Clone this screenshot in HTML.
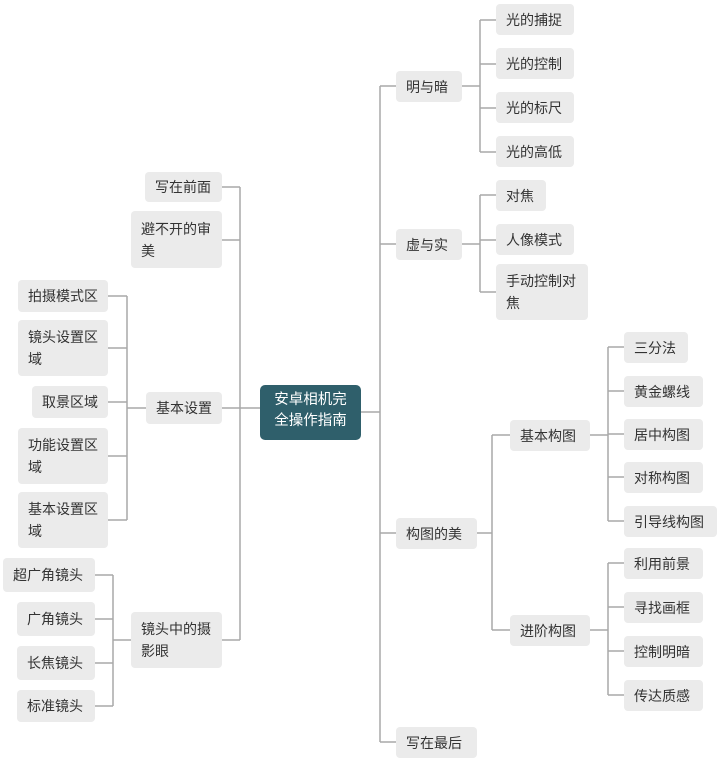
<!DOCTYPE html>
<html><head><meta charset="utf-8"><style>
body{margin:0;width:720px;height:761px;background:#fff;position:relative;overflow:hidden;font-family:"Liberation Sans","Noto Sans CJK SC",sans-serif;}
.b{position:absolute;background:#ebebeb;border-radius:4px;color:#333;font-size:14px;line-height:22px;padding:0 10px;box-sizing:border-box;display:flex;align-items:center;}
.c{position:absolute;left:260px;top:385px;width:101px;height:55px;background:#2f5f6b;border-radius:5px;color:#fff;font-size:14.5px;line-height:21px;padding:5px 12px;box-sizing:border-box;text-align:center;}
svg{position:absolute;left:0;top:0}
</style></head><body>
<svg width="720" height="761" fill="none" stroke="#a9a9a9" stroke-width="1.5">
<path d="M222 187H240M222 240H240M222 408H260M222 640H240M240 187V640"/>
<path d="M361 412H380M380 86V742M380 86H396M380 244H396M380 533H396M380 742H396"/>
<path d="M462 86H480M480 20V152M480 20H496M480 64H496M480 108H496M480 152H496"/>
<path d="M462 244H480M480 195V292M480 195H496M480 240H496M480 292H496"/>
<path d="M477 533H492M492 435V630M492 435H510M492 630H510"/>
<path d="M590 435H608M608 347V521M608 347H624M608 391H624M608 434H624M608 477H624M608 521H624"/>
<path d="M590 630H608M608 563V695M608 563H624M608 607H624M608 651H624M608 695H624"/>
<path d="M146 408H127M127 296V520M108 296H127M108 348H127M108 402H127M108 456H127M108 520H127"/>
<path d="M131 640H113M113 575V706M95 575H113M95 619H113M95 663H113M95 706H113"/>
</svg>
<div class="c">安卓相机完全操作指南</div>
<div class="b" style="left:145px;top:172px;width:77px;height:30px">写在前面</div>
<div class="b" style="left:131px;top:211px;width:91px;height:57px">避不开的审美</div>
<div class="b" style="left:146px;top:392px;width:76px;height:32px">基本设置</div>
<div class="b" style="left:131px;top:612px;width:91px;height:56px">镜头中的摄影眼</div>
<div class="b" style="left:18px;top:280px;width:90px;height:32px">拍摄模式区</div>
<div class="b" style="left:18px;top:320px;width:90px;height:56px">镜头设置区域</div>
<div class="b" style="left:32px;top:386px;width:76px;height:32px">取景区域</div>
<div class="b" style="left:18px;top:428px;width:90px;height:56px">功能设置区域</div>
<div class="b" style="left:18px;top:492px;width:90px;height:56px">基本设置区域</div>
<div class="b" style="left:3px;top:558px;width:92px;height:34px">超广角镜头</div>
<div class="b" style="left:17px;top:602px;width:78px;height:34px">广角镜头</div>
<div class="b" style="left:17px;top:646px;width:78px;height:34px">长焦镜头</div>
<div class="b" style="left:17px;top:690px;width:78px;height:32px">标准镜头</div>
<div class="b" style="left:396px;top:71px;width:66px;height:31px">明与暗</div>
<div class="b" style="left:396px;top:229px;width:66px;height:31px">虚与实</div>
<div class="b" style="left:396px;top:518px;width:81px;height:31px">构图的美</div>
<div class="b" style="left:396px;top:727px;width:81px;height:31px">写在最后</div>
<div class="b" style="left:496px;top:4px;width:78px;height:31px">光的捕捉</div>
<div class="b" style="left:496px;top:48px;width:78px;height:31px">光的控制</div>
<div class="b" style="left:496px;top:92px;width:78px;height:31px">光的标尺</div>
<div class="b" style="left:496px;top:136px;width:78px;height:31px">光的高低</div>
<div class="b" style="left:496px;top:180px;width:50px;height:31px">对焦</div>
<div class="b" style="left:496px;top:224px;width:78px;height:31px">人像模式</div>
<div class="b" style="left:496px;top:264px;width:92px;height:56px">手动控制对焦</div>
<div class="b" style="left:510px;top:420px;width:80px;height:31px">基本构图</div>
<div class="b" style="left:510px;top:615px;width:80px;height:31px">进阶构图</div>
<div class="b" style="left:624px;top:332px;width:64px;height:31px">三分法</div>
<div class="b" style="left:624px;top:376px;width:79px;height:31px">黄金螺线</div>
<div class="b" style="left:624px;top:419px;width:79px;height:31px">居中构图</div>
<div class="b" style="left:624px;top:462px;width:79px;height:31px">对称构图</div>
<div class="b" style="left:624px;top:506px;width:93px;height:31px">引导线构图</div>
<div class="b" style="left:624px;top:548px;width:79px;height:31px">利用前景</div>
<div class="b" style="left:624px;top:592px;width:79px;height:31px">寻找画框</div>
<div class="b" style="left:624px;top:636px;width:79px;height:31px">控制明暗</div>
<div class="b" style="left:624px;top:680px;width:79px;height:31px">传达质感</div>
</body></html>
